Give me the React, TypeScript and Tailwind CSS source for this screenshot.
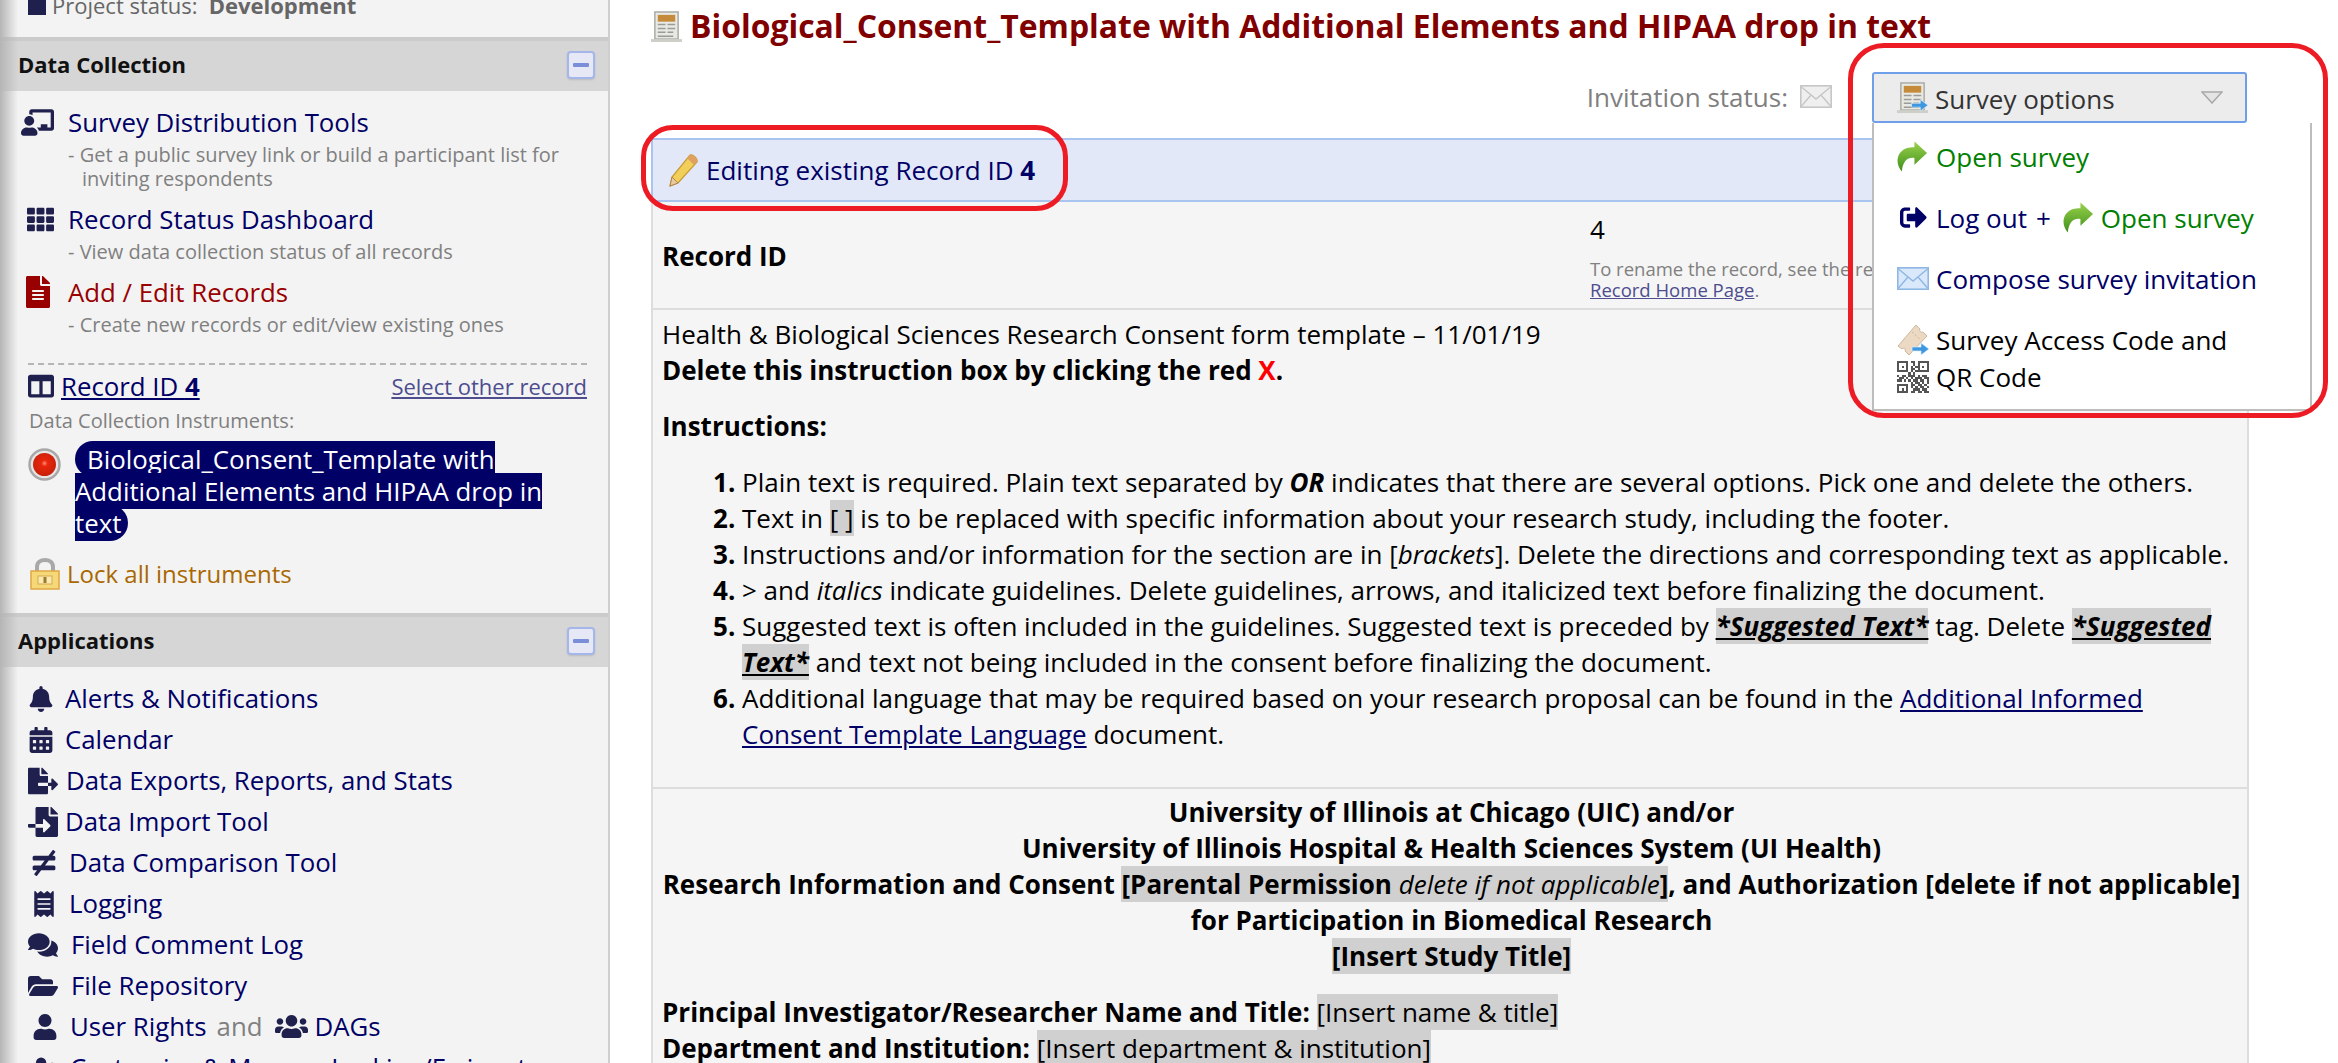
import type { ReactNode } from "react";
import {
  FaBell,
  FaCalendarAlt,
  FaChalkboardTeacher,
  FaColumns,
  FaComments,
  FaFileAlt,
  FaFileExport,
  FaFileImport,
  FaFolderOpen,
  FaNotEqual,
  FaReceipt,
  FaSignOutAlt,
  FaTh,
  FaUser,
  FaUserLock,
  FaUsers,
} from "react-icons/fa";

const iconColor = "text-[#20204f]";

function SectionHeader({ title }: { title: string }) {
  return (
    <div className="flex h-[54px] items-center justify-between border-t-[4px] border-[#cbcbcb] bg-[#d6d6d6] pb-[3px] pl-[18px] pr-[13px]">
      <span className="text-[22px] font-bold text-[#111]">{title}</span>
      <span className="flex h-[28px] w-[28px] items-center justify-center rounded-[4px] border-2 border-[#a5b6ea] bg-[#e6e9f5] shadow-[0_1px_2px_#bbb]">
        <span className="h-[4px] w-[16px] rounded-[1px] bg-[#7a8fd8]" />
      </span>
    </div>
  );
}

function ToolLink({
  icon,
  title,
  red,
  children,
}: {
  icon: ReactNode;
  title: string;
  red?: boolean;
  children: ReactNode;
}) {
  return (
    <div className="mb-[10px]">
      <div className="flex h-[36px] items-center">
        <span className="flex w-[68px] shrink-0 justify-end pr-[14px]">{icon}</span>
        <span className={`text-[25.8px] ${red ? "text-[#990000]" : "text-[#000066]"}`}>{title}</span>
      </div>
      <div className="mt-[3px] pl-[68px] text-[20px] leading-[24px] text-[#808080]">{children}</div>
    </div>
  );
}

function AppRow({ icon, left, children }: { icon: ReactNode; left: string; children: ReactNode }) {
  return (
    <div className="flex h-[41px] items-center pl-[28px] text-[25.8px] text-[#000066]">
      <span className={`flex shrink-0 justify-start ${left}`}>{icon}</span>
      {children}
    </div>
  );
}

function GreenArrow() {
  return (
    <svg width="31" height="33" viewBox="0 0 32 33" className="shrink-0">
      <defs>
        <linearGradient id="ga" x1="0" y1="0" x2="0" y2="1">
          <stop offset="0" stopColor="#9ad24c" />
          <stop offset="1" stopColor="#3f8f1c" />
        </linearGradient>
      </defs>
      <path
        d="M18 1 L31 13 L18 25 L18 18 C11 17 6 21 5 32 C0 26 -1 19 3 13 C7 8 12 7 18 7 Z"
        fill="url(#ga)"
      />
    </svg>
  );
}

function BlueArrow({ x, y }: { x: number; y: number }) {
  return (
    <path
      transform={`translate(${x} ${y})`}
      d="M0 4 H9 V0 L17 6 L9 12 V8 H0 Z"
      fill="#3f97e0"
      stroke="#d8ecfb"
      strokeWidth="0.7"
    />
  );
}

function FormIcon({ arrow, size = 32 }: { arrow?: boolean; size?: number }) {
  return (
    <svg width={size} height={size} viewBox="0 0 32 32" className="shrink-0">
      <rect x="4" y="1" width="24" height="28" fill="#e9e9e4" stroke="#a9a9a3" strokeWidth="1.5" />
      <rect x="7" y="4" width="18" height="7" fill="#c58a3a" />
      <path d="M7 14h8M17 14h8M7 18h8M17 18h8M7 22h8M17 22h6M7 26h16" stroke="#9a9a96" strokeWidth="1.6" />
      <rect x="0" y="29" width="32" height="3" fill="#cfcfca" />
      {arrow && <BlueArrow x={15} y={18} />}
    </svg>
  );
}

function MailIcon({ w = 32, tone = "blue" }: { w?: number; tone?: "blue" | "grey" }) {
  const fill = tone === "blue" ? "#d9e8fb" : "#efefef";
  const line = tone === "blue" ? "#8fb7e3" : "#c6c6c6";
  return (
    <svg width={w} height={w * 0.72} viewBox="0 0 32 23" className="shrink-0">
      <rect x="0.8" y="0.8" width="30.4" height="21.4" fill={fill} stroke={line} strokeWidth="1.6" />
      <path d="M1.5 2 L16 14 L30.5 2 M1.5 21 L11 10 M30.5 21 L21 10" fill="none" stroke={line} strokeWidth="1.4" />
    </svg>
  );
}

function TicketIcon() {
  return (
    <svg width="32" height="32" viewBox="0 0 32 32" className="shrink-0">
      <path
        d="M1 22 L19 1 L23 5 C22 7 24 9 26 8 L30 12 L12 31 L8 27 C9 25 7 23 5 25 Z"
        fill="#ecd9c3"
        stroke="#cdb79e"
        strokeWidth="1"
      />
      <path d="M15 8 L24 16" stroke="#cdb79e" strokeWidth="1" strokeDasharray="2 2" />
      <BlueArrow x={15} y={19} />
    </svg>
  );
}

function QrIcon() {
  const cells = [
    "11111011011111",
    "10001001010001",
    "10101010110101",
    "10001011010001",
    "11111010111111",
    "00000101000000",
    "10110111010110",
    "01101010111011",
    "11010101101101",
    "00000010110101",
    "11111011011010",
    "10001010101101",
    "10101001110110",
    "11111011011011",
  ];
  return (
    <svg width="32" height="32" viewBox="0 0 14 14" className="shrink-0" shapeRendering="crispEdges">
      {cells.map((row, y) =>
        row.split("").map((c, x) =>
          c === "1" ? <rect key={`${x}-${y}`} x={x} y={y} width="1" height="1" fill="#555" /> : null
        )
      )}
    </svg>
  );
}

function PencilIcon() {
  return (
    <svg width="32" height="34" viewBox="0 0 32 34" className="shrink-0">
      <path d="M23 2 C26 1 31 6 30 9 L11 30 L3 33 L5 24 Z" fill="#f1cf58" stroke="#c79a36" strokeWidth="1.2" />
      <path d="M23 2 C26 1 31 6 30 9 L27 12 L20 5 Z" fill="#e0a060" />
      <path d="M5 24 L11 30 L3 33 Z" fill="#e8c9a0" stroke="#a5763c" strokeWidth="0.8" />
    </svg>
  );
}

function RedDot() {
  return (
    <svg width="33" height="33" viewBox="0 0 33 33" className="shrink-0">
      <defs>
        <radialGradient id="rd" cx="0.5" cy="0.45" r="0.55">
          <stop offset="0" stopColor="#ff8a70" />
          <stop offset="0.25" stopColor="#e8260c" />
          <stop offset="1" stopColor="#c8200a" />
        </radialGradient>
      </defs>
      <circle cx="16.5" cy="16.5" r="15" fill="#e6e6e6" stroke="#a8a8a8" strokeWidth="2.5" />
      <circle cx="16.5" cy="16.5" r="11.5" fill="url(#rd)" />
    </svg>
  );
}

function LockIcon() {
  return (
    <svg width="30" height="32" viewBox="0 0 30 32" className="shrink-0">
      <path d="M7 14 V9 C7 4 11 2 15 2 C19 2 23 4 23 9 V14" fill="none" stroke="#a9a9a9" strokeWidth="4" />
      <rect x="1" y="13" width="28" height="18" fill="#f6d878" stroke="#dda944" strokeWidth="1.5" />
      <rect x="8" y="18" width="14" height="8" fill="#fbeab0" stroke="#d6a94a" strokeWidth="1" />
      <rect x="13.5" y="19" width="3" height="6" fill="#9a7a30" />
    </svg>
  );
}

function Mark({ children }: { children: ReactNode }) {
  return <span className="bg-[#d0d0d0]">{children}</span>;
}

function Step({ n, children }: { n: number; children: ReactNode }) {
  return (
    <li className="flex">
      <span className="w-[29px] shrink-0 font-bold">{n}.</span>
      <div>{children}</div>
    </li>
  );
}

function Sidebar() {
  return (
    <aside className="relative w-[610px] shrink-0 border-r-2 border-[#cfcfcf] bg-[#f3f3f3]">
      <div className="pointer-events-none absolute inset-y-0 left-0 w-[18px] bg-gradient-to-r from-[#b5b5b5] to-transparent" />
      <div className="flex h-[37px] items-start pl-[28px]">
        <div className="-mt-[13px] flex h-[36px] items-center text-[22px] text-[#666]">
          <span className="mr-[6px] h-[20px] w-[18px] bg-[#20204f]" />
          <span>Project status:</span>
          <b className="ml-[11px]">Development</b>
        </div>
      </div>

      <SectionHeader title="Data Collection" />

      <div className="pt-[13px]">
        <ToolLink icon={<FaChalkboardTeacher size={33} className={iconColor} />} title="Survey Distribution Tools">
          <div>- Get a public survey link or build a participant list for</div>
          <div className="pl-[14px]">inviting respondents</div>
        </ToolLink>
        <ToolLink icon={<FaTh size={27} className={iconColor} />} title="Record Status Dashboard">
          - View data collection status of all records
        </ToolLink>
        <ToolLink icon={<FaFileAlt size={32} className="text-[#990000]" />} title="Add / Edit Records" red>
          - Create new records or edit/view existing ones
        </ToolLink>
      </div>

      <div className="ml-[28px] mr-[21px] mt-[26px] border-t-2 border-dashed border-[#b5b5b5]" />

      <div className="ml-[28px] mr-[21px] mt-[3px] flex h-[36px] items-center justify-between">
        <div className="flex items-center text-[25.8px] text-[#000066]">
          <FaColumns size={26} className={`mr-[7px] ${iconColor}`} />
          <span className="underline">
            Record ID <b>4</b>
          </span>
        </div>
        <span className="text-[22px] text-[#4d4d8f] underline">Select other record</span>
      </div>
      <div className="ml-[29px] mt-[3px] text-[20px] leading-[27px] text-[#808080]">Data Collection Instruments:</div>

      <div className="mt-[9px] flex pl-[28px]">
        <span className="mt-[5px] w-[47px] shrink-0">
          <RedDot />
        </span>
        <div className="w-[480px] text-[25.8px] leading-[32px] text-white">
          <span className="rounded-[18px] bg-[#000066] pl-[12px] pr-[0px]">
            Biological_Consent_Template with Additional Elements and HIPAA drop in text&nbsp;
          </span>
        </div>
      </div>

      <div className="mt-[17px] flex h-[36px] items-center pl-[30px] text-[24px] text-[#a96800]">
        <LockIcon />
        <span className="ml-[7px]">Lock all instruments</span>
      </div>

      <div className="mt-[21px]">
        <SectionHeader title="Applications" />
      </div>

      <div className="pt-[11px]">
        <AppRow icon={<FaBell size={26} className={iconColor} />} left="w-[37px]">Alerts &amp; Notifications</AppRow>
        <AppRow icon={<FaCalendarAlt size={26} className={iconColor} />} left="w-[37px]">Calendar</AppRow>
        <AppRow icon={<FaFileExport size={30} className={iconColor} />} left="w-[38px]">Data Exports, Reports, and Stats</AppRow>
        <AppRow icon={<FaFileImport size={30} className={iconColor} />} left="w-[37px]">Data Import Tool</AppRow>
        <AppRow icon={<FaNotEqual size={26} className={iconColor} />} left="w-[41px] pl-[3px]">Data Comparison Tool</AppRow>
        <AppRow icon={<FaReceipt size={26} className={iconColor} />} left="w-[41px] pl-[3px]">Logging</AppRow>
        <AppRow icon={<FaComments size={30} className={iconColor} />} left="w-[43px]">Field Comment Log</AppRow>
        <AppRow icon={<FaFolderOpen size={30} className={iconColor} />} left="w-[43px]">File Repository</AppRow>
        <AppRow icon={<FaUser size={26} className={iconColor} />} left="w-[42px] pl-[4px]">
          <span>User Rights</span>
          <span className="ml-[10px] text-[#808080]">and</span>
          <FaUsers size={33} className={`ml-[12px] mr-[7px] ${iconColor}`} />
          <span>DAGs</span>
        </AppRow>
        <AppRow icon={<FaUserLock size={26} className={iconColor} />} left="w-[42px] pl-[4px]">
          Customize &amp; Manage Locking/E-signatures
        </AppRow>
      </div>
    </aside>
  );
}

function SurveyMenu() {
  return (
    <div className="absolute left-0 top-full z-10 w-[440px] border-2 border-t-0 border-[#bdbdbd] bg-white pb-[14px] pl-[23px] pr-[10px] pt-[3px] text-[26px] text-[#000066]">
      <div className="flex h-[61px] items-center text-[#008000]">
        <span className="w-[39px]">
          <GreenArrow />
        </span>
        Open survey
      </div>
      <div className="flex h-[61px] items-center">
        <span className="flex w-[39px] pl-[3px]">
          <FaSignOutAlt size={27} className="text-[#000066]" />
        </span>
        Log out
        <span className="ml-[9px] mr-[12px]">+</span>
        <GreenArrow />
        <span className="ml-[7px] text-[#008000]">Open survey</span>
      </div>
      <div className="flex h-[61px] items-center">
        <span className="w-[39px]">
          <MailIcon />
        </span>
        Compose survey invitation
      </div>
      <div className="mt-[12px] text-black">
        <div className="flex h-[37px] items-center">
          <span className="w-[39px]">
            <TicketIcon />
          </span>
          Survey Access Code and
        </div>
        <div className="flex h-[37px] items-center">
          <span className="w-[39px]">
            <QrIcon />
          </span>
          QR Code
        </div>
      </div>
    </div>
  );
}

function Main() {
  return (
    <main className="min-w-0 flex-1 bg-white pl-[41px] text-[26px] leading-[36px] text-black">
      <div className="flex h-[52px] items-center">
        <FormIcon size={31} />
        <h1 className="ml-[8px] text-[31.9px] font-bold text-[#800000]">
          Biological_Consent_Template with Additional Elements and HIPAA drop in text
        </h1>
      </div>

      <div className="flex h-[86px] w-[1596px] justify-end pt-[20px]">
        <div className="mt-[9px] flex h-[32px] items-center text-[#808080]">
          Invitation status:
          <span className="ml-[12px]">
            <MailIcon tone="grey" />
          </span>
        </div>
        <div className="relative ml-[40px] h-[51px] w-[375px]">
          <div className="flex h-[51px] items-center rounded-[3px] border-2 border-[#6f9fe8] bg-[#ececec] pl-[23px] pr-[22px] text-[#333]">
            <FormIcon arrow size={31} />
            <span className="ml-[7px] mt-[2px] flex-1">Survey options</span>
            <svg width="22" height="13" viewBox="0 0 22 13">
              <path d="M1 1 H21 L11 12 Z" fill="#e4e4e4" stroke="#a8a8a8" strokeWidth="1.5" />
            </svg>
          </div>
          <SurveyMenu />
        </div>
      </div>

      <div className="w-[1598px] border-x-2 border-[#dddddd] bg-[#f5f5f5]">
        <div className="-mx-[2px] flex h-[64px] items-center border-2 border-[#a9c4ef] bg-[#e2e8f7] pl-[14px] text-[#000066]">
          <PencilIcon />
          <span className="ml-[7px]">
            Editing existing Record ID <b>4</b>
          </span>
        </div>

        <div className="flex h-[108px] border-b-2 border-[#dddddd] pl-[9px]">
          <div className="flex w-[928px] shrink-0 items-center pt-[2px] font-bold">Record ID</div>
          <div className="pt-[9px]">
            <div>4</div>
            <div className="mt-[11px] text-[18.5px] leading-[21px] text-[#808080]">
              To rename the record, see the record actions located on the
              <br />
              <span className="text-[#4d4d8f] underline">Record Home Page</span>.
            </div>
          </div>
        </div>

        <div className="h-[479px] border-b-2 border-[#dddddd] pl-[9px] pt-[6px]">
          <div>Health &amp; Biological Sciences Research Consent form template – 11/01/19</div>
          <div className="font-bold">
            Delete this instruction box by clicking the red <span className="text-[#ff0000]">X</span>.
          </div>
          <div className="mt-[20px] font-bold">Instructions:</div>
          <ol className="mt-[20px] w-[1578px] pl-[51px]">
            <Step n={1}>
              Plain text is required. Plain text separated by <b><i>OR</i></b> indicates that there are several options. Pick one and delete the others.
            </Step>
            <Step n={2}>
              Text in <Mark>[ ]</Mark> is to be replaced with specific information about your research study, including the footer.
            </Step>
            <Step n={3}>
              Instructions and/or information for the section are in [<i>brackets</i>]. Delete the directions and corresponding text as applicable.
            </Step>
            <Step n={4}>
              &gt; and <i>italics</i> indicate guidelines. Delete guidelines, arrows, and italicized text before finalizing the document.
            </Step>
            <Step n={5}>
              Suggested text is often included in the guidelines. Suggested text is preceded by{" "}
              <Mark><b><i className="underline">*Suggested Text*</i></b></Mark> tag. Delete{" "}
              <Mark><b><i className="underline">*Suggested Text*</i></b></Mark> and text not being included in the consent before finalizing the document.
            </Step>
            <Step n={6}>
              Additional language that may be required based on your research proposal can be found in the{" "}
              <span className="text-[#000066] underline">Additional Informed Consent Template Language</span> document.
            </Step>
          </ol>
        </div>

        <div className="pl-[9px] pr-[6px] pt-[5px]">
          <div className="text-center font-bold">
            <div>University of Illinois at Chicago (UIC) and/or</div>
            <div>University of Illinois Hospital &amp; Health Sciences System (UI Health)</div>
            <div>
              Research Information and Consent <Mark>[Parental Permission <i className="font-normal">delete if not applicable</i>]</Mark>, and Authorization [delete if not applicable]
            </div>
            <div>for Participation in Biomedical Research</div>
            <div>
              <Mark>[Insert Study Title]</Mark>
            </div>
          </div>
          <div className="mt-[20px]">
            <b>Principal Investigator/Researcher Name and Title:</b> <Mark>[Insert name &amp; title]</Mark>
          </div>
          <div>
            <b>Department and Institution:</b> <Mark>[Insert department &amp; institution]</Mark>
          </div>
        </div>
      </div>
    </main>
  );
}

export default function App() {
  return (
    <div className="relative flex h-[1063px] w-[2338px] overflow-hidden bg-white font-['Open_Sans',sans-serif]">
      <Sidebar />
      <Main />
      {/* red call-outs drawn on top of the screenshot */}
      <div className="pointer-events-none absolute left-[641px] top-[125px] z-20 h-[86px] w-[427px] rounded-[32px] border-[5px] border-[#ed1c24]" />
      <div className="pointer-events-none absolute left-[1848px] top-[43px] z-20 h-[375px] w-[480px] rounded-[36px] border-[5px] border-[#ed1c24]" />
    </div>
  );
}
